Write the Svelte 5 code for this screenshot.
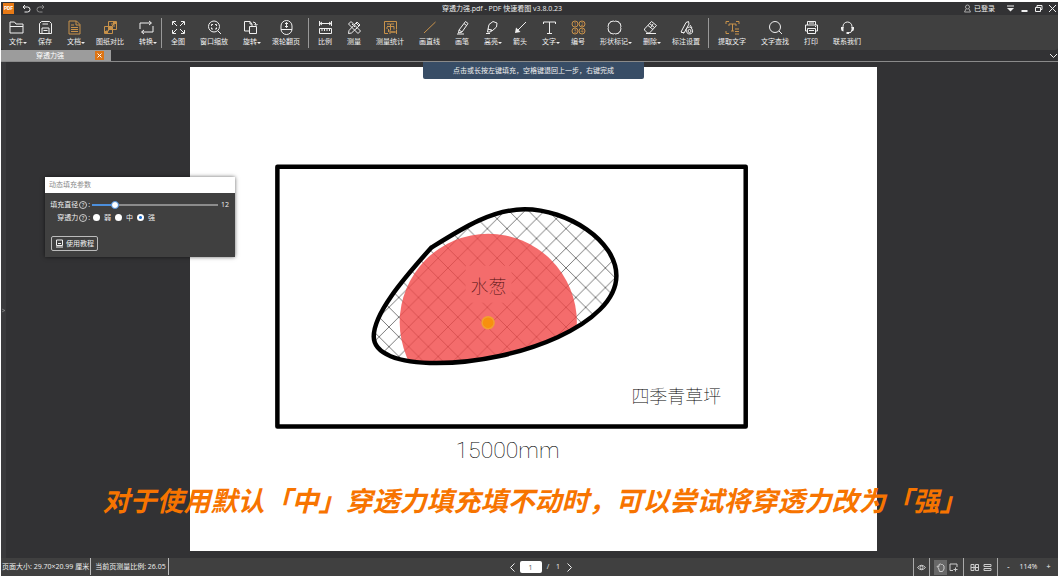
<script lang="ts">
  type Tool = {
    label: string
    d: string
    fill?: string
    menu?: boolean
    gold?: boolean
    digits?: boolean
  }

  const groups: Tool[][] = [
    [
      { label: '文件', menu: true, d: 'M1 13V2h4.500l1.500 2H14v9zM1 6.500h13' },
      { label: '保存', d: 'M1.500 13.500v-10l2-2h8l2 2v10zM4 13V8h7v5M4.500 4h5.500M5.500 10.500h4' },
      { label: '文档', menu: true, gold: true, d: 'M2 1h7.500L13 4.500V14H2zM9 1v4h4M4 5h3M4 7.500h7M4 9.500h7M4 11.500h7' },
      { label: '图纸对比', gold: true, d: 'M5.500 1.500h8v8h-8zM1.500 6.500h8v7h-8zM7 8l4-4M3 11h2.500V9M8 4h3v3', fill: 'M6 7h3v2H6zM10 2h3v2h-3zM2 11h3v2H2z' },
      { label: '转换', menu: true, d: 'M1 9V3h11M10 1l2.500 2L10 5M14 6v6H3M5 10l-2.500 2L5 14' }
    ],
    [
      { label: '全图', d: 'M1.500 5V1.500H5M2 2l4 4M10 1.500h3.500V5M13 2L9 6M1.500 10v3.500H5M2 13l4-4M10 13.500h3.500V10M13 13L9 9' },
      { label: '窗口缩放', d: 'M12.500 6.500a5.500 5.500 0 1 1-11 0a5.500 5.500 0 1 1 11 0M11 11l3 3M4.500 6V4.500H6M8 4.500h1.500V6M9.500 7.500V9H8M6 9H4.500V7.500' },
      { label: '旋转', menu: true, d: 'M6 11H1.500V1.500H7L9 4v2M7 1.500V4h2M6.500 6.500h7v7h-7zM10 2q3 0 3 3M11.500 4L13 5.500L14.500 4' },
      { label: '滚轮翻页', d: 'M2 6a5.500 5.500 0 0 1 11 0v3a5.500 5.500 0 0 1-11 0zM2 9.500h11M7.500 2.500v5M6 4l1.500-1.500L9 4M6 6l1.500 1.500L9 6' }
    ],
    [
      { label: '比例', d: 'M1.500 1v5M13.500 1v5M2 3.500h11M4 2L2 3.500L4 5M11 2l2 1.500L11 5M1.500 8.500h12v5h-12zM4 9v2M6.500 9v2M9 9v2M11.500 9v2' },
      { label: '测量', d: 'M4 1.500l9.500 9.500l-2.500 2.500L1.500 4zM5 5l1-1M7 7l1-1M9 9l1-1M10 2l3 3L4.500 13L1.500 13.500L2 10.500zM9 3l3 3' },
      { label: '测量统计', gold: true, d: 'M5 13.500H1.500v-12h12v8M4 4h3M4 6.500h7v3M4 9V7M7.500 6V4H11M7.500 7v3M5.500 9v3M7 10v4M13.500 10v4M7 12h6M9 11v2M11 11v2' },
      { label: '画直线', gold: true, d: 'M2 13L13.500 2' },
      { label: '画笔', d: 'M4 10L10.500 1.500L13 3.500L7 12L3.500 13zM4 10l3 2M2 14h7M9 3.500L11.500 5.500' },
      { label: '高亮', menu: true, d: 'M4 9L5 4.500L9 1.500L13 3L12.500 7L8.500 10.500zM4 9l4.500 1.500L6 12H3.500zM2 13.500h4' },
      { label: '箭头', d: 'M13 2L4 11', fill: 'M2 13L3 7.500L7.500 12z' },
      { label: '文字', menu: true, d: 'M1.500 4V2h12v2M7.500 2v11M5 13.500h5' },
      { label: '编号', gold: true, digits: true, d: 'M7 4a3 3 0 1 1-6 0a3 3 0 1 1 6 0M14 4a3 3 0 1 1-6 0a3 3 0 1 1 6 0M7 11a3 3 0 1 1-6 0a3 3 0 1 1 6 0M14 11a3 3 0 1 1-6 0a3 3 0 1 1 6 0' },
      { label: '形状标记', menu: true, d: 'M3 3q0-2 2-1.500q1-1 2.500 0q1.500-1 2.500 0q2-.500 2 1.500q2 0 1.500 2q1 1 0 2.500q1 1.500 0 2.500q.500 2-1.500 2q0 2-2 1.500q-1 1-2.500 0q-1.500 1-2.500 0q-2 .500-2-1.500q-2 0-1.500-2q-1-1 0-2.500q-1-1.500 0-2.500q-.500-2 1.500-2' },
      { label: '删除', menu: true, d: 'M1.500 9L8.500 1.500L13.500 5.500L6.500 13H4.500L1.500 10zM5 5.500l5 4M6.500 3.500l5 4M8 7l2-3M3 13.500h10' },
      { label: '标注设置', d: 'M2 12L7 2.500L9.500 1.500L10 4L5 13zM2 12l3 1M11 5l2 3M7 9q4-4 6 0q2 4-2 5q-4 0-4-5M12 11a1.500 1.500 0 1 1-3 0a1.500 1.500 0 1 1 3 0' }
    ],
    [
      { label: '提取文字', gold: true, d: 'M1 4V1.500h3M11 1.500h3V4M1 11v2.500h3M4 6V4h7v2M7.500 4v7M6 11h3M10 9h4M10 11.500h4M10 14h4' },
      { label: '文字查找', d: 'M12.500 7a5.500 5.500 0 1 1-11 0a5.500 5.500 0 1 1 11 0M11 11l3 3' },
      { label: '打印', d: 'M3.500 5V1.500h8V5M3 11H1.500V5h12v6H12M3.500 8.500h8v5h-8zM5 10.500h5M11 6.500h1M5 3h5' },
      { label: '联系我们', d: 'M3 8V6.500a4.500 4.500 0 0 1 9 0V8M12 10q0 3-4 3', fill: 'M1 7h2.500v4.500Q1 11 1 9zM14 7h-2.500v4.500Q14 11 14 9zM6.500 12h2.500v2H6.500z' }
    ]
  ]

  const digits = [
    { n: 1, x: 4, y: 5.5 },
    { n: 2, x: 11, y: 5.5 },
    { n: 3, x: 4, y: 12.5 },
    { n: 4, x: 11, y: 12.5 }
  ]

  const levels = ['弱', '中', '强']
  const maxDiameter = 70
  const outline =
    'M431.500 248C462 229 492 209.500 525 209.500C568 209.500 617 241 617 276C617 324 520 363 437 363.500C398 363.500 374 354 374 337C374 314 402 281 431.500 248Z'

  let diameter = $state(12)
  let level = $state('强')
  let page = $state('1')
</script>

<div class="window">
  <header class="titlebar">
    <span class="logo">PDF</span>
    <button aria-label="撤销">
      <svg viewBox="0 0 9 9"><path d="M3 1L1 3l2 2M1 3h4.500q2.500 0 2.500 2.500T5.500 8H2.500" /></svg>
    </button>
    <button class="dim" aria-label="恢复">
      <svg viewBox="0 0 9 9"><path d="M6 1l2 2l-2 2M8 3H3.500Q1 3 1 5.500T3.500 8h3" /></svg>
    </button>
    <h1>穿透力强.pdf - PDF 快速看图 v3.8.0.23</h1>
    <button class="user">
      <svg viewBox="0 0 9 9"><path d="M6.500 3a2 2 0 1 1-4 0a2 2 0 1 1 4 0M3 5L1.500 8h6L6 5" /></svg>
      已登录
    </button>
    <div class="controls">
      <button aria-label="菜单"><svg viewBox="0 0 9 9"><path d="M1 2h7" /><path class="solid" d="M1 4h7L4.500 7.500z" /></svg></button>
      <button aria-label="最小化"><svg viewBox="0 0 9 9"><path class="thick" d="M1.500 7h6" /></svg></button>
      <button aria-label="还原"><svg viewBox="0 0 9 9"><path d="M1.500 3.500h5v4h-5zM3 3V1.500h5v4H7" /></svg></button>
      <button aria-label="关闭"><svg viewBox="0 0 9 9"><path d="M1 1l7 7M8 1L1 8" /></svg></button>
    </div>
  </header>

  <nav class="toolbar">
    {#each groups as group}
      <div class="group">
        {#each group as tool}
          <button class="tool" class:gold={tool.gold} class:menu={tool.menu}>
            <svg viewBox="0 0 15 15">
              <path d={tool.d} />
              {#if tool.fill}<path class="solid" d={tool.fill} />{/if}
              {#if tool.digits}
                {#each digits as c}<text x={c.x} y={c.y} text-anchor="middle">{c.n}</text>{/each}
              {/if}
            </svg>
            <span>{tool.label}</span>
          </button>
        {/each}
      </div>
    {/each}
  </nav>

  <div class="tabs">
    <div class="tab">
      <span>穿透力强</span>
      <button aria-label="关闭标签"><svg viewBox="0 0 9 9"><path d="M2.500 2.500l4 4M6.500 2.500l-4 4" /></svg></button>
    </div>
    <button class="more" aria-label="更多标签"><svg viewBox="0 0 9 9"><path d="M1 3l3.500 3.500L8 3" /></svg></button>
  </div>

  <main class="canvas">
    <p class="hint">点击或长按左键填充，空格键退回上一步，右键完成</p>
    <button class="drawer" aria-label="展开侧栏"><svg viewBox="0 0 9 9"><path d="M2 2l5 2.500L2 7" /></svg></button>

    <svg class="sheet" viewBox="190 67 687 485">
      <defs>
        <pattern id="hatch" x="556.700" y="238.700" width="19.700" height="19.700" patternUnits="userSpaceOnUse">
          <path d="M0 0l19.700 19.700M19.700 0L0 19.700" fill="none" stroke="#555" stroke-width="0.800" />
        </pattern>
        <clipPath id="inside"><path d={outline} /></clipPath>
      </defs>
      <rect x="277.500" y="167" width="469" height="260" class="frame" />
      <path d={outline} fill="url(#hatch)" />
      <rect x="466" y="266" width="46" height="37" fill="#fff" />
      <circle cx="488.700" cy="322.700" r="88.700" clip-path="url(#inside)" class="brush" />
      <path d={outline} class="outline" />
      <text x="489" y="293" class="plant">水葱</text>
      <circle cx="488.500" cy="323" r="6" class="cursor" />
      <text x="677" y="403" class="lawn">四季青草坪</text>
      <text x="508" y="459" class="size">15000mm</text>
    </svg>

    <section class="panel">
      <h2>动态填充参数</h2>
      <div class="fields">
        <div class="row">
          <label class="name" for="diameter">填充直径<i>?</i>:</label>
          <input
            id="diameter"
            type="range"
            min="1"
            max={maxDiameter}
            bind:value={diameter}
            style="--done: {((diameter - 1) / (maxDiameter - 1)) * 100}%"
          />
          <output for="diameter">{diameter}</output>
        </div>
        <div class="row" role="radiogroup" aria-labelledby="strength">
          <span class="name" id="strength">穿透力<i>?</i>:</span>
          {#each levels as item}
            <label class="choice"><input type="radio" name="level" value={item} bind:group={level} />{item}</label>
          {/each}
        </div>
        <button class="guide">
          <svg viewBox="0 0 9 9"><path d="M1.500 1h6v5.500h-6zM1 8h7M3 4.500h3" /></svg>
          使用教程
        </button>
      </div>
    </section>

    <p class="caption">对于使用默认「中」穿透力填充填不动时，可以尝试将穿透力改为「强」</p>
  </main>

  <footer class="status">
    <div class="info">
      <span>页面大小: 29.70×20.99 厘米</span>
      <span>当前页测量比例: 26.05</span>
    </div>
    <div class="pager">
      <button aria-label="上一页"><svg viewBox="0 0 9 9"><path d="M6.500 0.500l-4 4l4 4" /></svg></button>
      <input aria-label="页码" bind:value={page} />
      <span>/</span>
      <span>1</span>
      <button aria-label="下一页"><svg viewBox="0 0 9 9"><path d="M2.500 0.500l4 4l-4 4" /></svg></button>
    </div>
    <div class="view">
      <div class="set">
        <button aria-label="显示"><svg viewBox="0 0 9 9"><path d="M0.500 4.500q4-4.500 8 0q-4 4.500-8 0M6 4.500a1.500 1.500 0 1 1-3 0a1.500 1.500 0 1 1 3 0" /></svg></button>
      </div>
      <div class="set">
        <button class="active" aria-label="拖动"><svg viewBox="0 0 9 9"><path d="M2.500 5L1 3.500L2 3l1 .500V1.500l1.500-.500l1 .500l1 0l1.500 1.500v3L6.500 8.500h-3z" /></svg></button>
        <button aria-label="选择"><svg viewBox="0 0 9 9"><path d="M4 7.500H1v-6.500h7v3M6.500 4.500v4M4.500 6.500h4" /></svg></button>
      </div>
      <div class="set">
        <button aria-label="双页"><svg viewBox="0 0 9 9"><path d="M1 1.500h3v6H1zM5.500 1.500h3v6h-3zM1 4.500h7.500" /></svg></button>
        <button aria-label="连续"><svg viewBox="0 0 9 9"><path d="M1 1.500h7v2H1zM1 5.500h7v2H1z" /></svg></button>
      </div>
      <div class="set zoom">
        <button aria-label="缩小">-</button>
        <span>114%</span>
        <button aria-label="放大">+</button>
      </div>
    </div>
  </footer>
</div>

<style>
  :global(body) {
    background: #fff;
  }

  .window {
    display: flex;
    flex-direction: column;
    box-sizing: border-box;
    min-height: calc(100vh - 4px);
    margin: 2px 1px;
    background: #323234;
    color: #f0f0f0;
    font: 7px/10px 'Open Sans', 'Noto Sans CJK SC', sans-serif;
  }

  h1,
  h2,
  p {
    margin: 0;
    font-size: inherit;
    font-weight: 400;
  }

  button {
    display: flex;
    align-items: center;
    justify-content: center;
    padding: 0;
    border: 0;
    background: none;
    color: inherit;
    font: inherit;
  }

  button svg {
    width: 9px;
    height: 9px;
    fill: none;
    stroke: currentColor;
    stroke-width: 1;
  }

  svg .solid {
    fill: currentColor;
    stroke: none;
  }

  svg .thick {
    stroke-width: 2;
  }

  .titlebar {
    display: flex;
    align-items: center;
    height: 13px;
    padding: 0 1px 0 2px;
  }

  .titlebar h1 {
    flex: 1;
    padding-right: 4px;
    text-align: center;
  }

  .logo {
    width: 11px;
    height: 11px;
    margin-right: 8px;
    background: #e87a16;
    color: #fff;
    font: 700 5px/11px Roboto, sans-serif;
    text-align: center;
  }

  .logo + button {
    margin-right: 5px;
  }

  .dim {
    color: #8a8a8a;
  }

  .user {
    gap: 2px;
    margin-right: 11px;
  }

  .user svg {
    color: #aaa;
  }

  .controls {
    display: flex;
    gap: 5px;
  }

  .toolbar {
    display: flex;
    height: 35px;
    background: #404040;
    border-radius: 0 0 3px 3px;
  }

  .group {
    display: flex;
    align-items: flex-start;
    padding: 0 1px;
  }

  .group + .group {
    padding-left: 2px;
  }

  .group:not(:last-child) {
    background: linear-gradient(#999, #999) right center / 1px 30px no-repeat;
  }

  .tool {
    position: relative;
    flex-direction: column;
    gap: 2px;
    padding: 5px 8px 0 7px;
    white-space: nowrap;
  }

  .tool svg {
    width: 15px;
    height: 15px;
    margin: 0 -1px;
  }

  .tool text {
    fill: currentColor;
    stroke: none;
    font-size: 5px;
  }

  .gold svg {
    color: #c8924a;
  }

  .menu::after {
    content: '';
    position: absolute;
    right: 4px;
    bottom: 3px;
    border: 2px solid transparent;
    border-top-color: #eee;
    border-bottom: 0;
  }

  .tabs {
    display: flex;
    justify-content: space-between;
    height: 11px;
    border-bottom: 1px solid #8a8a8a;
  }

  .tab {
    display: flex;
    align-items: center;
    width: 110px;
    background: #9c9c9c;
    color: #fff;
  }

  .tab span {
    flex: 1;
    padding-left: 4px;
    text-align: center;
  }

  .tab button {
    margin-right: 7px;
    background: #dc7414;
  }

  .canvas {
    position: relative;
    flex: 1;
    padding: 5px 0 5px 8px;
  }

  .sheet {
    display: block;
    width: 65.4%;
    margin: 0 auto;
    background: #fff;
    font-family: 'Noto Sans CJK SC', sans-serif;
    font-weight: 100;
    text-anchor: middle;
  }

  .frame,
  .outline {
    fill: none;
    stroke: #000;
    stroke-width: 4.5;
    stroke-linejoin: round;
  }

  .brush {
    fill: #f14747;
    fill-opacity: 0.8;
  }

  .plant {
    fill: #4a0c0c;
    font-size: 18px;
  }

  .cursor {
    fill: #f7900e;
    stroke: #f2a030;
    stroke-width: 1.5;
  }

  .lawn {
    font-size: 18px;
  }

  .size {
    font-family: Roboto, sans-serif;
    font-size: 23px;
  }

  .hint {
    position: absolute;
    top: 0;
    right: 0;
    left: 8px;
    width: fit-content;
    margin: 0 auto;
    padding: 0 30px;
    background: #384d66;
    border-radius: 0 0 2px 2px;
    line-height: 17px;
  }

  .drawer {
    position: absolute;
    top: 0;
    bottom: 0;
    left: 0;
    width: 5px;
    background: #3a3a3c;
    color: #aaa;
  }

  .drawer svg {
    width: 5px;
  }

  .panel {
    position: absolute;
    top: 115px;
    left: 44px;
    width: 190px;
    background: #404040;
    box-shadow: 0 0 4px rgba(0, 0, 0, 0.6);
  }

  .panel h2 {
    padding-left: 4px;
    background: #fff;
    color: #888;
    line-height: 16px;
  }

  .fields {
    padding: 5px 6px 6px 0;
  }

  .row {
    display: flex;
    align-items: center;
    height: 13px;
  }

  .name {
    display: flex;
    align-items: center;
    justify-content: flex-end;
    width: 45px;
    white-space: nowrap;
  }

  .name i {
    box-sizing: border-box;
    width: 8px;
    height: 8px;
    margin: 0 1px;
    border: 1px solid #ccc;
    border-radius: 50%;
    font-size: 6px;
    font-style: normal;
    line-height: 6px;
    text-align: center;
  }

  input[type='range'] {
    flex: 1;
    min-width: 0;
    height: 8px;
    margin: 0 3px 0 2px;
    appearance: none;
    background: linear-gradient(90deg, #4c8fdc var(--done), #8c8c8c var(--done)) center / 100% 2px no-repeat;
  }

  input[type='range']::-webkit-slider-thumb {
    width: 8px;
    height: 8px;
    border: 1px solid #4c8fdc;
    border-radius: 50%;
    appearance: none;
    background: #fff;
  }

  .choice {
    display: flex;
    align-items: center;
    gap: 4px;
    width: 22px;
  }

  .name + .choice {
    margin-left: 3px;
  }

  .choice input {
    width: 7px;
    height: 7px;
    margin: 0;
    border-radius: 50%;
    appearance: none;
    background: #fff;
  }

  .choice input:checked {
    background: radial-gradient(circle, #1f6fd0 0 1px, #fff 2px);
  }

  .guide {
    gap: 2px;
    height: 15px;
    margin: 12px 0 0 6px;
    padding: 0 3px;
    border: 1px solid #bbb;
    border-radius: 2px;
  }

  .caption {
    position: absolute;
    right: 0;
    bottom: 38px;
    left: 10px;
    color: #f77400;
    font: italic 700 27px/40px 'Noto Sans CJK SC', sans-serif;
    text-align: center;
    white-space: nowrap;
  }

  .status {
    display: flex;
    align-items: stretch;
    height: 18px;
    background: #404040;
  }

  .info,
  .view {
    display: flex;
    flex: 1;
    line-height: 18px;
    white-space: nowrap;
  }

  .info span {
    height: 17px;
    padding: 0 1px;
    border-right: 1px solid #bbb;
  }

  .info span + span {
    padding: 0 2px 0 4px;
  }

  .pager {
    display: flex;
    align-items: center;
    gap: 3px;
    margin-left: 22px;
  }

  .pager span {
    width: 7px;
    text-align: center;
  }

  .pager input {
    box-sizing: border-box;
    width: 22px;
    height: 12px;
    padding: 0;
    border: 0;
    border-radius: 2px;
    background: #fff;
    color: #555;
    font: inherit;
    text-align: center;
  }

  .view {
    justify-content: flex-end;
  }

  .set {
    display: flex;
    align-items: center;
    padding: 0 3px 0 4px;
    border-left: 1px solid #aaa;
  }

  .set:first-child {
    padding: 0 1px;
  }

  .set button {
    width: 13px;
    height: 15px;
    color: #ccc;
  }

  .set .active {
    background: #686868;
  }

  .zoom button {
    font-weight: 700;
  }

  .zoom span {
    width: 27px;
    text-align: center;
  }
</style>
